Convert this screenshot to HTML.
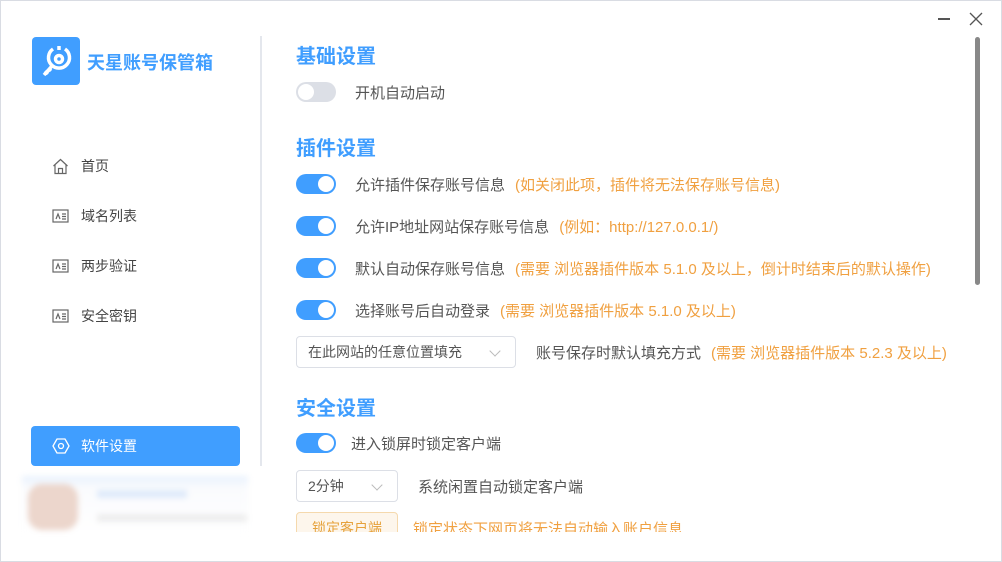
<!DOCTYPE html>
<html><head><meta charset="utf-8"><style>
*{margin:0;padding:0;box-sizing:border-box}
body{width:1002px;height:562px;overflow:hidden;background:#fff;font-family:"Liberation Sans","Noto Sans CJK SC",sans-serif;position:relative;color:#555}
.frame{position:absolute;inset:0;border:1px solid #d9dce3}
.abs{position:absolute}
.logo{left:32px;top:37px;width:48px;height:48px;background:#409eff;border-radius:4px}
.title{left:87px;top:49px;font-size:18px;font-weight:bold;color:#409eff}
.nav{left:52px;font-size:14px;color:#444;display:flex;align-items:center}
.nav svg{margin-right:12px}
.div{left:260px;top:36px;width:2px;height:430px;background:#e4e7ed}
.active{left:31px;top:426px;width:209px;height:40px;background:#409eff;border-radius:4px;color:#fff;font-size:14px;display:flex;align-items:center;padding-left:21px}
.main{left:262px;top:36px;width:710px;height:496px;overflow:hidden}
.h{position:absolute;left:34px;font-size:20px;font-weight:bold;color:#409eff}
.row{position:absolute;left:34px;display:flex;align-items:center;font-size:15px;color:#555;height:20px;white-space:nowrap}
.tg{width:40px;height:20px;border-radius:10px;background:#409eff;position:relative;margin-right:19px;flex:none}
.tg::after{content:"";position:absolute;right:2px;top:2px;width:16px;height:16px;border-radius:50%;background:#fff}
.tg.off{background:#dcdfe6}.tg.off::after{left:2px;right:auto}
.o{color:#f0a040;margin-left:10px}
.sel{border:1px solid #dcdfe6;border-radius:4px;height:32px;display:flex;align-items:center;padding-left:11px;font-size:14px;color:#555;position:relative;margin-right:20px}
.sel::after{content:"";position:absolute;right:16px;top:10px;width:7px;height:7px;border-right:1px solid #bbb;border-bottom:1px solid #bbb;transform:rotate(45deg)}
</style></head><body>
<div class="frame"></div>
<div class="abs logo"><svg width="48" height="48" viewBox="0 0 48 48" fill="none" stroke="#fff" stroke-width="3.5"><path d="M21 12 A10.5 10.5 0 1 0 33 12"/><path d="M27 9 V13"/><circle cx="27" cy="22" r="3.5"/><path d="M20 29 L12 38 M13 34 l3 3 M16 31 l3 3"/></svg></div>
<div class="abs title">天星账号保管箱</div>
<div class="abs nav" style="top:156px"><svg width="17" height="17" viewBox="0 0 17 17" fill="none" stroke="#666" stroke-width="1.2"><path d="M1.5 8 L8.5 1.5 L15.5 8 M3 7 V15.5 H14 V7 M6.5 15.5 V10.5 H10.5 V15.5"/></svg>首页</div>
<div class="abs nav" style="top:206px"><svg width="17" height="14" viewBox="0 0 17 14" fill="none" stroke="#666" stroke-width="1.2"><rect x="1" y="1" width="15" height="12"/><path d="M4 10 L6 5 L8 10 M10 5h4 M10 7.5h4 M10 10h4"/></svg>域名列表</div>
<div class="abs nav" style="top:256px"><svg width="17" height="14" viewBox="0 0 17 14" fill="none" stroke="#666" stroke-width="1.2"><rect x="1" y="1" width="15" height="12"/><path d="M4 10 L6 5 L8 10 M10 5h4 M10 7.5h4 M10 10h4"/></svg>两步验证</div>
<div class="abs nav" style="top:306px"><svg width="17" height="14" viewBox="0 0 17 14" fill="none" stroke="#666" stroke-width="1.2"><rect x="1" y="1" width="15" height="12"/><path d="M4 10 L6 5 L8 10 M10 5h4 M10 7.5h4 M10 10h4"/></svg>安全密钥</div>
<div class="abs div"></div>
<div class="abs active"><svg width="18" height="18" viewBox="0 0 18 18" fill="none" stroke="#fff" stroke-width="1.3" style="margin-right:11px"><path d="M5 2 H13 L17 9 L13 16 H5 L1 9 Z" stroke-linejoin="round"/><circle cx="9" cy="9" r="2.5"/></svg>软件设置</div>
<div class="abs" style="left:22px;top:476px;width:226px;height:60px;background:linear-gradient(#e8f1fd,#fafbfd 20%,#fff);filter:blur(3px)"><div style="position:absolute;left:6px;top:8px;width:50px;height:46px;border-radius:14px;background:#ecd6cc"></div><div style="position:absolute;left:75px;top:14px;width:90px;height:8px;background:#dfeafa"></div><div style="position:absolute;left:75px;top:38px;width:150px;height:8px;background:#eee"></div></div>
<div class="abs" style="left:938px;top:18px;width:12px;height:2px;background:#555"></div>
<svg class="abs" style="left:969px;top:12px" width="14" height="14" stroke="#555" stroke-width="1.3"><path d="M1 1L13 13M13 1L1 13"/></svg>
<div class="abs" style="left:975px;top:37px;width:5px;height:248px;background:#888;border-radius:3px"></div>
<div class="abs main">
<div class="h" style="top:4px">基础设置</div>
<div class="row" style="top:46px"><div class="tg off"></div>开机自动启动</div>
<div class="h" style="top:96px">插件设置</div>
<div class="row" style="top:138px"><div class="tg"></div>允许插件保存账号信息<span class="o">(如关闭此项，插件将无法保存账号信息)</span></div>
<div class="row" style="top:180px"><div class="tg"></div>允许IP地址网站保存账号信息<span class="o">(例如：http://127.0.0.1/)</span></div>
<div class="row" style="top:222px"><div class="tg"></div>默认自动保存账号信息<span class="o">(需要 浏览器插件版本 5.1.0 及以上，倒计时结束后的默认操作)</span></div>
<div class="row" style="top:264px"><div class="tg"></div>选择账号后自动登录<span class="o">(需要 浏览器插件版本 5.1.0 及以上)</span></div>
<div class="row" style="top:300px;height:32px"><div class="sel" style="width:220px">在此网站的任意位置填充</div>账号保存时默认填充方式<span class="o">(需要 浏览器插件版本 5.2.3 及以上)</span></div>
<div class="h" style="top:356px">安全设置</div>
<div class="row" style="top:397px"><div class="tg" style="margin-right:15px"></div>进入锁屏时锁定客户端</div>
<div class="row" style="top:434px;height:32px"><div class="sel" style="width:102px">2分钟</div>系统闲置自动锁定客户端</div>
<div class="row" style="top:476px;height:32px"><div style="width:102px;height:32px;border:1px solid #f5d9ad;background:#fdf6ec;border-radius:4px;color:#e6a23c;display:flex;align-items:center;justify-content:center;margin-right:15px;font-size:14px">锁定客户端</div><span style="color:#f0a040">锁定状态下网页将无法自动输入账户信息</span></div>
</div>
</body></html>
